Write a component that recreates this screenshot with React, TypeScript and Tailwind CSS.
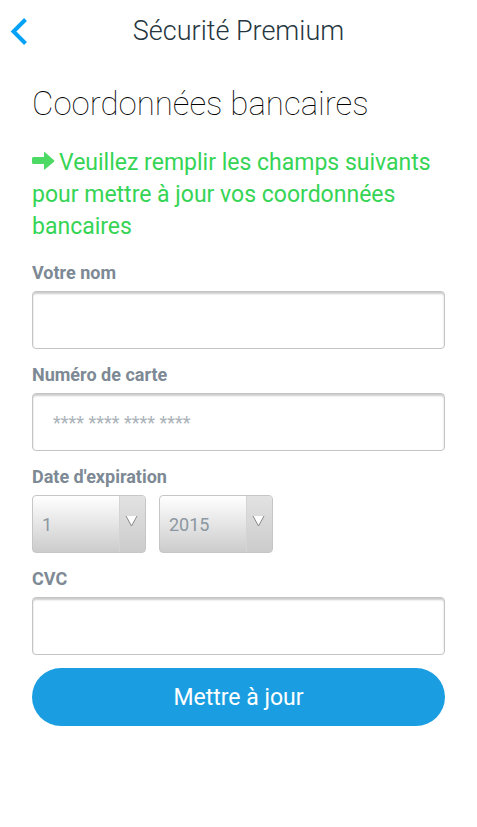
import React from "react";

const label = "block pb-1.5 text-lg leading-6 font-bold text-[#7d8994]";
const field =
  "block h-[58px] w-full rounded border border-[#c4c4c4] bg-white px-5 text-lg text-[#7d8994] shadow-[inset_0_2px_2px_rgba(0,0,0,0.2)] outline-none placeholder:text-[#aab2b8]";

function Picker({ id, name, options }: { id: string; name: string; options: string[] }) {
  return (
    <div className="relative h-[58px] w-[114px] overflow-hidden rounded border border-[#c6c6c6] bg-linear-to-b from-white to-[#cccccc]">
      <select
        id={id}
        aria-label={name}
        className="size-full appearance-none bg-transparent pt-0.5 pr-7 pl-[9px] text-lg text-[#8b97a1] outline-none"
      >
        {options.map((o) => (
          <option key={o}>{o}</option>
        ))}
      </select>
      <span className="pointer-events-none absolute inset-y-0 right-0 flex w-[26px] items-center justify-center border-l border-[#d4d4d4] bg-linear-to-b from-[#e2e2e2] to-[#cccccc] pr-0.5 pb-1.5">
        <svg width="13" height="12" viewBox="0 0 13 12">
          <path d="M1 1h11L6.500 11z" fill="#fff" />
          <path d="M1 1l5.500 10L12 1" fill="none" stroke="#888" />
        </svg>
      </span>
    </div>
  );
}

export default function App() {
  return (
    <div className="min-h-screen bg-white font-[Roboto,sans-serif]">
      <header className="flex h-[62px] items-center">
        <button type="button" aria-label="Retour" className="w-10 pl-[10px]">
          <svg width="18" height="28" viewBox="0 0 18 28" fill="none" stroke="#03a2f5" strokeWidth="4">
            <path d="M15.500 2.500L3.500 14.500l12 12" />
          </svg>
        </button>
        <h1 className="flex-1 pr-10 text-center text-[27px] leading-8 font-light text-[#263640]">
          Sécurité Premium
        </h1>
      </header>
      <main className="px-8 pt-[23px]">
        <h2 className="text-[33px] leading-[38px] font-thin text-black">Coordonnées bancaires</h2>
        <p className="pt-6 text-[23px] leading-8 text-[#35d455]">
          <svg className="mr-1 inline-block align-baseline" width="23" height="20" viewBox="0 0 23 20" fill="#4cd964">
            <path d="M1.500 7H12V2.500Q12 1.500 13 2.200L22 10.200q.8.8 0 1.600L13 19.300Q12 20 12 19V14H1.500Q0 14 0 12.500v-4Q0 7 1.500 7z" />
          </svg>
          Veuillez remplir les champs suivants pour mettre à jour vos coordonnées bancaires
        </p>
        <form className="pt-[18px]" onSubmit={(e) => e.preventDefault()}>
          <div className="flex flex-col gap-3.5">
            <div>
              <label htmlFor="nom" className={label}>Votre nom</label>
              <input id="nom" type="text" className={field} />
            </div>
            <div>
              <label htmlFor="carte" className={label}>Numéro de carte</label>
              <input id="carte" type="text" placeholder="**** **** **** ****" className={field} />
            </div>
            <div>
              <label htmlFor="mois" className={label}>Date d'expiration</label>
              <div className="flex gap-[13px]">
                <Picker id="mois" name="Mois d'expiration" options={["1", "2", "3", "4", "5", "6", "7", "8", "9", "10", "11", "12"]} />
                <Picker id="annee" name="Année d'expiration" options={["2015", "2016", "2017", "2018", "2019", "2020"]} />
              </div>
            </div>
            <div>
              <label htmlFor="cvc" className={label}>CVC</label>
              <input id="cvc" type="text" className={field} />
            </div>
          </div>
          <button type="submit" className="mt-[13px] h-[58px] w-full rounded-full bg-[#1b9ee1] pt-0.5 text-[23px] text-white">
            Mettre à jour
          </button>
        </form>
      </main>
    </div>
  );
}
